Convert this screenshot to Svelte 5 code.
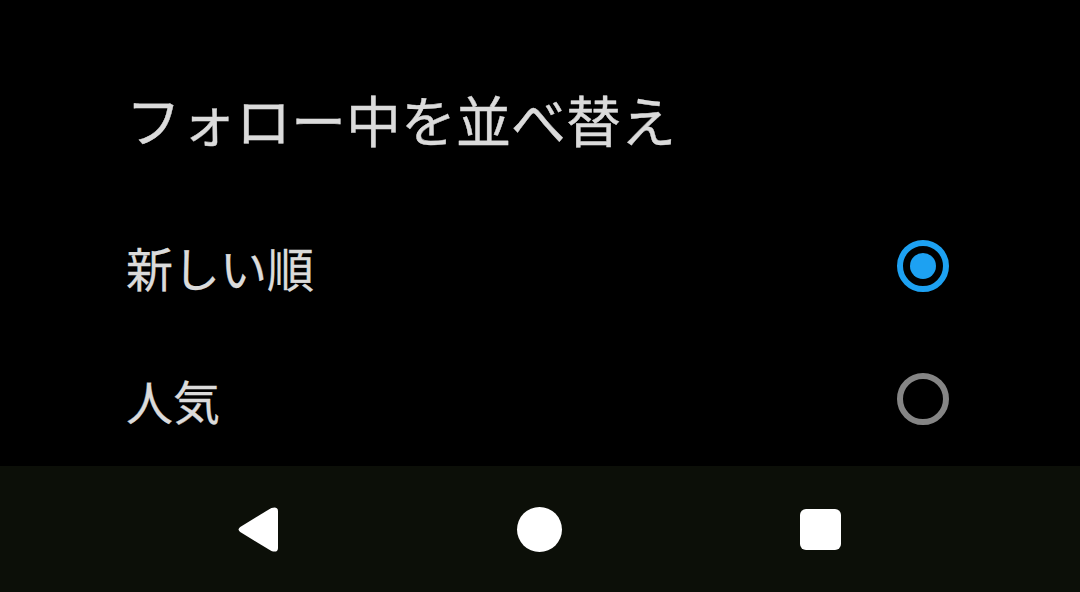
<script>
  const options = [
    { label: "新しい順", selected: true },
    { label: "人気", selected: false }
  ];
</script>

<div class="screen">
  <section class="dialog">
    <h1 class="title">フォロー中を並べ替え</h1>
    <ul class="options">
      {#each options as option}
        <li class="option">
          <span class="label">{option.label}</span>
          <span class="radio" class:selected={option.selected}></span>
        </li>
      {/each}
    </ul>
  </section>

  <nav class="navbar">
    <svg class="back" viewBox="0 0 40 44" width="40" height="45" preserveAspectRatio="none">
      <path d="M2.2 19.6 L33.4 0.9 Q40 -1 40 4 L40 40 Q40 45 33.4 43.1 L2.2 24.4 Q-1 22 2.2 19.6 Z" fill="#fff" />
    </svg>
    <span class="home"></span>
    <span class="recent"></span>
  </nav>
</div>

<style>
  :global(body) {
    margin: 0;
    background: #000;
  }

  .screen {
    width: 1080px;
    height: 592px;
    display: flex;
    flex-direction: column;
    background: #000;
    overflow: hidden;
    font-family: "Noto Sans CJK JP", "Noto Sans", sans-serif;
    color: #dedede;
  }

  .dialog {
    flex: 1;
    padding: 0 131px 0 126px;
  }

  .title {
    margin: 0;
    padding: 79px 0 0;
    font-size: 55px;
    line-height: 78px;
    font-weight: 400;
    white-space: nowrap;
    opacity: 0.99;
    -webkit-text-stroke: 0.4px #dedede;
  }

  .options {
    list-style: none;
    margin: 0;
    padding: 43px 0 0;
  }

  .option {
    height: 133px;
    display: flex;
    align-items: center;
    justify-content: space-between;
  }

  .label {
    font-size: 47px;
    line-height: 66px;
    opacity: 0.99;
    -webkit-text-stroke: 0.3px #dedede;
  }

  .radio {
    box-sizing: border-box;
    width: 52px;
    height: 52px;
    margin-bottom: 2px;
    border: 6px solid #858585;
    border-radius: 50%;
    display: flex;
    align-items: center;
    justify-content: center;
  }

  .radio.selected {
    border-color: #1da1f2;
  }

  .radio.selected::after {
    content: "";
    width: 26px;
    height: 26px;
    border-radius: 50%;
    background: #1da1f2;
  }

  .navbar {
    height: 126px;
    flex-shrink: 0;
    background: #0c0f08;
    display: flex;
    align-items: center;
    padding: 0 239px 0 238px;
    justify-content: space-between;
  }

  .back {
    display: block;
    margin-top: 1px;
  }

  .home {
    width: 45px;
    height: 45px;
    margin-top: 1px;
    border-radius: 50%;
    background: #fff;
  }

  .recent {
    width: 41px;
    height: 41px;
    margin-top: 1px;
    border-radius: 6px;
    background: #fff;
  }
</style>
